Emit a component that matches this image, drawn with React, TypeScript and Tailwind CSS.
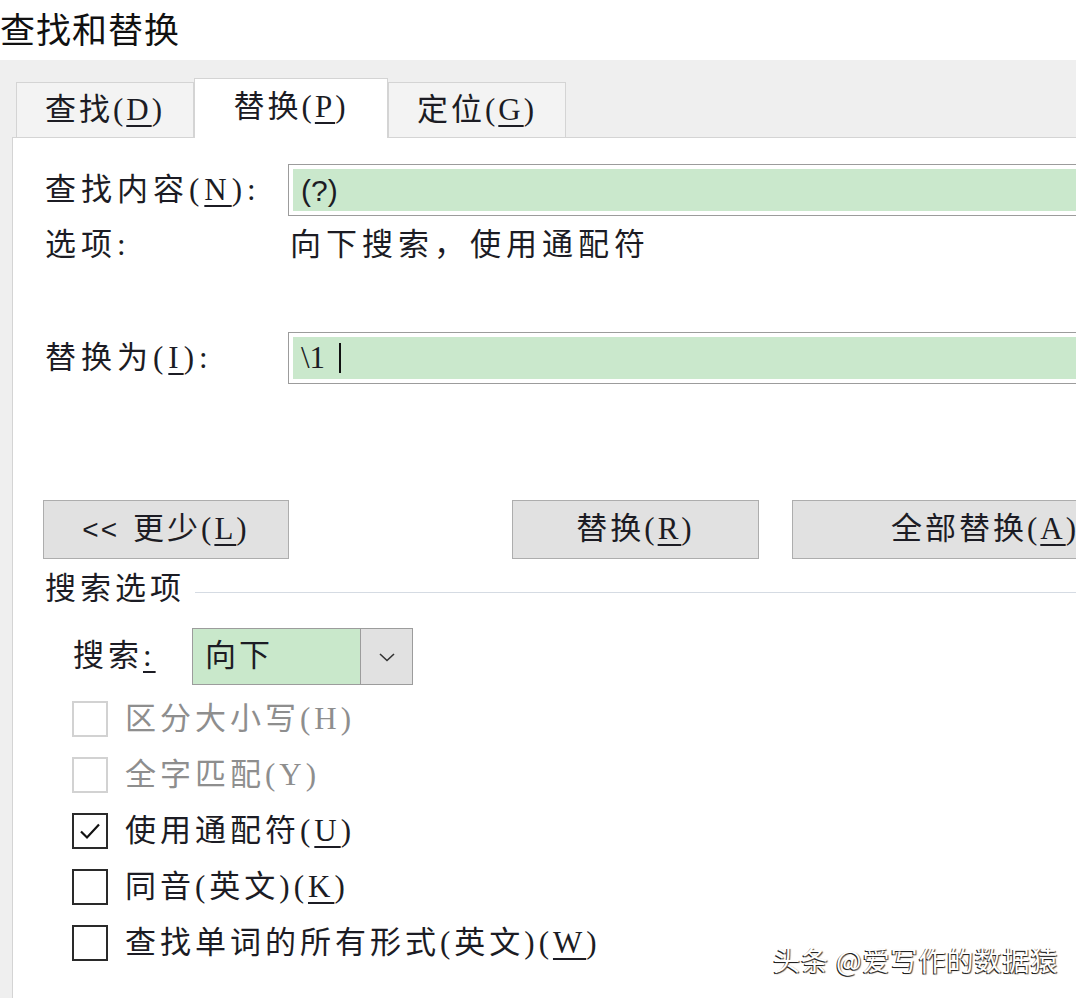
import type { ReactNode } from "react";

const SERIF = "font-['Liberation_Serif','Noto_Sans_CJK_SC',serif]";

// Accelerator letter, underlined like Win32 mnemonics.
const Acc = ({ children }: { children: ReactNode }) => (
    <span className="underline decoration-[2px] underline-offset-[5px]">{children}</span>
);

const Tab = ({ label, acc, active }: { label: string; acc: string; active?: boolean }) => (
    <div
        className={
            active
                ? "relative z-10 -mb-px flex h-[60px] w-[194px] items-center justify-center border border-b-0 border-[#d4d4d4] bg-white pb-[2px] text-[31px]"
                : "flex h-[55px] w-[178px] items-center justify-center border border-b-0 border-[#d4d4d4] bg-[#f3f3f3] text-[31px]"
        }
    >
        <span className="tracking-[3px]">
            {label}(<Acc>{acc}</Acc>)
        </span>
    </div>
);

const TextBox = ({ children }: { children: ReactNode }) => (
    <div className="h-[52px] w-[820px] shrink-0 border border-[#9c9c9c] bg-white p-[4px]">
        <div className="flex h-full items-center bg-[#cae8cc] pl-[8px]">{children}</div>
    </div>
);

const Button = ({ w, children }: { w: string; children: ReactNode }) => (
    <div className={`flex h-[59px] shrink-0 items-center justify-center border border-[#adadad] bg-[#e1e1e1] text-[31px] tracking-[3px] ${w}`}>
        {children}
    </div>
);

const Check = ({ label, checked, disabled }: { label: ReactNode; checked?: boolean; disabled?: boolean }) => (
    <div className="flex h-[56px] items-center pl-[29px]">
        <div
            className={
                disabled
                    ? "flex size-[36px] shrink-0 items-center justify-center border-[2px] border-[#d2d2d2] bg-white"
                    : "flex size-[36px] shrink-0 items-center justify-center border-[2px] border-[#2a2a2a] bg-white"
            }
        >
            {checked && (
                <svg width="24" height="24" viewBox="0 0 24 24" fill="none">
                    <path d="M3 12.5 L9 18.5 L21 5.5" stroke="#111" strokeWidth="2.2" />
                </svg>
            )}
        </div>
        <span
            className={
                disabled
                    ? "ml-[17px] whitespace-nowrap text-[31px] tracking-[4px] text-[#8e8e8e]"
                    : "ml-[17px] whitespace-nowrap text-[31px] tracking-[4px] text-[#1c1c24]"
            }
        >
            {label}
        </span>
    </div>
);

export default function App() {
    return (
        <div className={`relative flex h-[998px] w-[1076px] flex-col overflow-hidden bg-[#efefef] text-[#1c1c24] ${SERIF}`}>
            {/* Title bar */}
            <div className="h-[60px] shrink-0 bg-white">
                <div className="pt-[3px] font-['Noto_Sans_CJK_SC',sans-serif] text-[35px] leading-[50px] tracking-[1px] text-[#111]">
                    查找和替换
                </div>
            </div>

            {/* Tabs */}
            <div className="flex h-[77px] shrink-0 items-end pl-[16px]">
                <Tab label="查找" acc="D" />
                <Tab label="替换" acc="P" active />
                <Tab label="定位" acc="G" />
            </div>

            {/* Panel */}
            <div className="ml-[12px] flex-1 overflow-hidden border-l border-t border-[#d4d4d4] bg-white pl-[30px]">
                <div className="mt-[26px] flex items-center">
                    <div className="w-[245px] shrink-0 whitespace-nowrap pl-[2px] text-[31px] tracking-[5px]">
                        查找内容(<Acc>N</Acc>):
                    </div>
                    <TextBox>
                        <span className="font-['Liberation_Sans',sans-serif] text-[30px]">(?)</span>
                    </TextBox>
                </div>

                <div className="mt-[9px] flex h-[40px] items-center">
                    <div className="w-[247px] shrink-0 pl-[2px] text-[31px] tracking-[5px]">选项:</div>
                    <div className="whitespace-nowrap text-[31px] tracking-[5px]">向下搜索，使用通配符</div>
                </div>

                <div className="mt-[67px] flex items-center">
                    <div className="w-[245px] shrink-0 whitespace-nowrap pl-[2px] text-[31px] tracking-[5px]">
                        替换为(<Acc>I</Acc>):
                    </div>
                    <TextBox>
                        <span className="text-[31px]">\1</span>
                        <span className="ml-[14px] h-[30px] w-[2px] bg-[#111]" />
                    </TextBox>
                </div>

                <div className="mt-[116px] flex items-center">
                    <Button w="w-[246px]">
                        <span className="font-['Liberation_Sans',sans-serif] text-[28px] font-light tracking-[2px]">&lt;&lt;</span>
                        <span className="ml-[14px]">
                            更少(<Acc>L</Acc>)
                        </span>
                    </Button>
                    <div className="ml-[223px]">
                        <Button w="w-[247px]">
                            替换(<Acc>R</Acc>)
                        </Button>
                    </div>
                    <div className="ml-[33px]">
                        <Button w="w-[386px]">
                            全部替换(<Acc>A</Acc>)
                        </Button>
                    </div>
                </div>

                <div className="mt-[12px] flex h-[36px] items-center">
                    <span className="whitespace-nowrap pl-[2px] text-[31px] tracking-[4px]">搜索选项</span>
                    <div className="ml-[10px] mt-[6px] h-px flex-1 bg-[#d5dbe3]" />
                </div>

                <div className="mt-[21px] flex items-center pl-[30px]">
                    <span className="w-[119px] text-[31px] tracking-[4px]">
                        搜索<Acc>:</Acc>
                    </span>
                    <div className="flex h-[57px] w-[221px] border border-[#9c9c9c]">
                        <div className="flex flex-1 items-center bg-[#c9e8cb] pl-[12px] text-[31px] tracking-[3px]">向下</div>
                        <div className="flex w-[52px] items-center justify-center border-l border-[#9c9c9c] bg-[#e1e1e1]">
                            <svg width="18" height="12" viewBox="0 0 18 12" fill="none">
                                <path d="M2 3 L9 9.5 L16 3" stroke="#333" strokeWidth="1.6" />
                            </svg>
                        </div>
                    </div>
                </div>

                <div className="mt-[6px]">
                    <Check label="区分大小写(H)" disabled />
                    <Check label="全字匹配(Y)" disabled />
                    <Check
                        checked
                        label={
                            <>
                                使用通配符(<Acc>U</Acc>)
                            </>
                        }
                    />
                    <Check
                        label={
                            <>
                                同音(英文)(<Acc>K</Acc>)
                            </>
                        }
                    />
                    <Check
                        label={
                            <>
                                查找单词的所有形式(英文)(<Acc>W</Acc>)
                            </>
                        }
                    />
                </div>
            </div>

            {/* Watermark */}
            <div className="pointer-events-none absolute left-[773px] top-[942px] whitespace-nowrap font-['Noto_Sans_CJK_SC',sans-serif] text-[27px] leading-[36px] tracking-[1px] text-white [text-shadow:-1px_1px_0_#222,1px_1px_1px_#444]">
                头条 @爱写作的数据猿
            </div>
        </div>
    );
}
